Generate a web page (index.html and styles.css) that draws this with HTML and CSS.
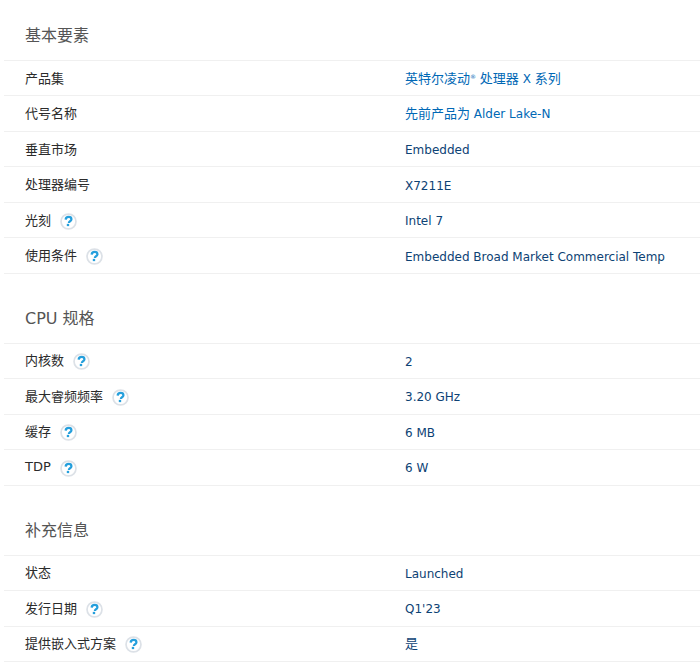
FILE: index.html
```html
<!DOCTYPE html>
<html lang="zh">
<head>
<meta charset="utf-8">
<title>规格</title>
<link rel="stylesheet" href="styles.css">
</head>
<body>
<svg class="defs" width="0" height="0" aria-hidden="true"><symbol id="q" viewBox="0 0 18 18"><circle cx="9" cy="9" r="7.9" fill="#fff" stroke="#dce1e7" stroke-width="1.8"/><path d="M6 7c.1-1.8 1.3-2.8 3.1-2.8s3 1 3 2.4c0 1.2-.8 1.7-1.5 2.2-.7.4-1.2.8-1.2 1.7" fill="none" stroke="#259fdc" stroke-width="2.4"/><rect x="7.2" y="11.5" width="2.5" height="2.4" fill="#259fdc"/></symbol></svg>
<main class="spec">
  <section class="group first">
    <h2 class="title">基本要素</h2>
    <div class="row"><span class="label">产品集</span><a class="value link" href="#">英特尔凌动<sup class="reg">®</sup><span class="lat"> </span>处理器<span class="lat"> X </span>系列</a></div>
    <div class="row"><span class="label">代号名称</span><a class="value link" href="#">先前产品为<span class="lat"> Alder Lake-N</span></a></div>
    <div class="row"><span class="label">垂直市场</span><span class="value lat">Embedded</span></div>
    <div class="row"><span class="label">处理器编号</span><span class="value lat">X7211E</span></div>
    <div class="row"><span class="label">光刻<svg class="help"><use href="#q"/></svg></span><span class="value lat">Intel 7</span></div>
    <div class="row"><span class="label">使用条件<svg class="help"><use href="#q"/></svg></span><span class="value lat">Embedded Broad Market Commercial Temp</span></div>
  </section>
  <section class="group">
    <h2 class="title">CPU 规格</h2>
    <div class="row"><span class="label">内核数<svg class="help"><use href="#q"/></svg></span><span class="value lat">2</span></div>
    <div class="row"><span class="label">最大睿频频率<svg class="help"><use href="#q"/></svg></span><span class="value lat">3.20 GHz</span></div>
    <div class="row"><span class="label">缓存<svg class="help"><use href="#q"/></svg></span><span class="value lat">6 MB</span></div>
    <div class="row"><span class="label">TDP<svg class="help"><use href="#q"/></svg></span><span class="value lat">6 W</span></div>
  </section>
  <section class="group">
    <h2 class="title">补充信息</h2>
    <div class="row"><span class="label">状态</span><span class="value lat">Launched</span></div>
    <div class="row"><span class="label">发行日期<svg class="help"><use href="#q"/></svg></span><span class="value lat">Q1'23</span></div>
    <div class="row"><span class="label">提供嵌入式方案<svg class="help"><use href="#q"/></svg></span><span class="value">是</span></div>
  </section>
</main>
</body>
</html>
```
FILE: styles.css
```css
html, body { margin: 0; padding: 0; background: #fff; overflow: hidden; }
body { height: 670px; font-family: "DejaVu Sans", "Noto Sans CJK SC", sans-serif; font-size: 13px; }
.defs { display: block; height: 0; }
.spec { padding-left: 4px; }
.title { margin: 0; height: 69.9px; padding: 33px 0 0 21px; box-sizing: border-box; font-size: 16px; font-weight: 400; line-height: 24px; color: #555; border-bottom: 1px solid #f0f0f0; }
.first .title { height: 60.8px; padding-top: 24px; }
.row { display: flex; align-items: center; height: 35.5px; box-sizing: border-box; padding: 0 0 2px 21px; border-bottom: 1px solid #f0f0f0; }
.label { width: 380px; flex: none; display: flex; align-items: center; color: #2b2b2b; }
.value { color: #0d4274; }
.link { color: #0068b5; text-decoration: none; }
.lat { font-size: 12px; }
.value.lat { margin-top: 4px; }
.reg { font-size: 6px; line-height: 0; vertical-align: 4px; }
.help { width: 17px; height: 17px; margin: 4px 0 0 9px; flex: none; }
```
